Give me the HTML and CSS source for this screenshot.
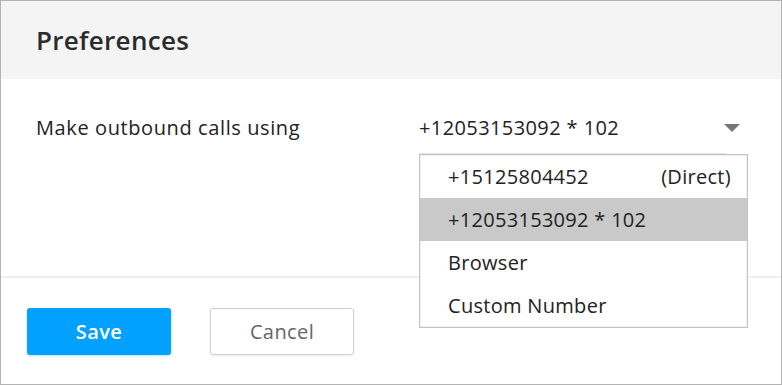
FILE: index.html
```html
<!DOCTYPE html>
<html lang="en">
<head>
  <meta charset="UTF-8" />
  <title>Preferences</title>
  <link rel="stylesheet" href="styles.css">
</head>
<body>

  <div class="panel">
    <!-- header -->
    <div class="panel-header">Preferences</div>

    <!-- settings -->
    <div class="panel-body">
      <div class="field-row">
        <div class="field-label">Make outbound calls using</div>
        <div class="select">
          <div class="select-value">
            <span>+12053153092 * 102</span>
            <span class="caret"></span>
          </div>
          <ul class="select-menu">
            <li><span>+15125804452</span><span>(Direct)</span></li>
            <li class="active"><span>+12053153092 * 102</span></li>
            <li><span>Browser</span></li>
            <li><span>Custom Number</span></li>
          </ul>
        </div>
      </div>
    </div>

    <!-- buttons -->
    <div class="panel-footer">
      <button class="btn btn-primary">Save</button>
      <button class="btn btn-default">Cancel</button>
    </div>
  </div>

</body>
</html>
```

FILE: styles.css
```css
* {
  margin: 0;
  padding: 0;
  box-sizing: border-box;
}

body {
  font-family: "Open Sans", "Liberation Sans", sans-serif;
  background-color: #fff;
  color: #222;
}

.panel {
  width: 782px;
  height: 385px;
  border: 1px solid #b3b3b3;
  display: flex;
  flex-direction: column;
}

/* header */
.panel-header {
  height: 78px;
  background-color: #f4f4f4;
  padding-left: 35px;
  display: flex;
  align-items: center;
  font-size: 26px;
  font-weight: 600;
  letter-spacing: 0.3px;
  color: #2b2b2b;
}

/* body */
.panel-body {
  height: 197px;
  padding: 31px 0 0 35px;
}

.field-row {
  display: flex;
  align-items: flex-start;
}

.field-label {
  width: 383px;
  height: 36px;
  line-height: 36px;
  font-size: 20px;
  letter-spacing: 0.6px;
}

.select {
  position: relative;
  width: 307px;
}

.select-value {
  display: flex;
  justify-content: space-between;
  align-items: center;
  height: 44px;
  padding-bottom: 8px;
  font-size: 20px;
  letter-spacing: 0.4px;
  border-bottom: 1px solid #e2e2e2;
}

.caret {
  width: 0;
  height: 0;
  margin-right: -14px;
  border-left: 8px solid transparent;
  border-right: 8px solid transparent;
  border-top: 8px solid #777;
}

.select-menu {
  position: absolute;
  top: 44px;
  left: 0;
  width: 329px;
  list-style: none;
  background-color: #fff;
  border: 1px solid #c4c4c4;
  box-shadow: inset 0 0 0 1px #f0f0f0;
}

.select-menu li {
  display: flex;
  justify-content: space-between;
  align-items: center;
  height: 43px;
  padding: 0 16px 0 28px;
  font-size: 20px;
  letter-spacing: 0.3px;
}

.select-menu li.active {
  background-color: #c9c9c9;
}

/* footer */
.panel-footer {
  flex: 1;
  border-top: 2px solid #f0f0f0;
  padding: 30px 0 0 26px;
  display: flex;
  align-items: flex-start;
  gap: 39px;
}

.btn {
  width: 144px;
  height: 47px;
  border-radius: 3px;
  font-family: inherit;
  font-size: 20px;
  letter-spacing: 0.4px;
  cursor: pointer;
}

.btn-primary {
  background-color: #03a1ff;
  border: none;
  color: #fff;
  font-weight: 600;
  box-shadow: 0 1px 3px rgba(3, 161, 255, 0.3);
}

.btn-default {
  background-color: #fff;
  border: 1px solid #cfcfcf;
  color: #666;
  box-shadow: 0 1px 2px rgba(0, 0, 0, 0.08);
}
```
